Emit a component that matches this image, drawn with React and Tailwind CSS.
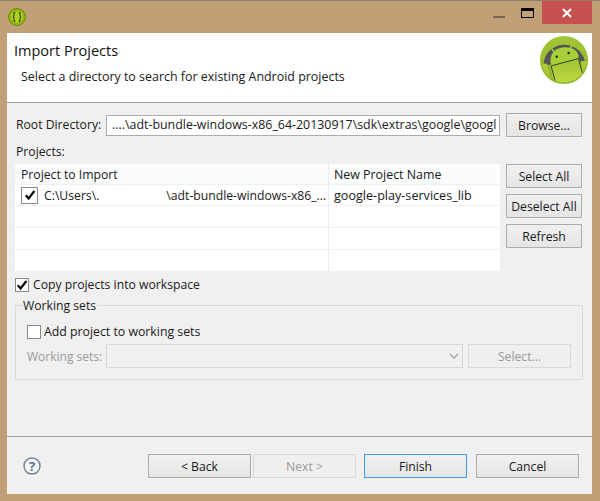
import React from 'react';

function Btn({ children, className = '', tone = 'normal' }) {
  const tones = {
    normal: 'border-[#acacac] bg-gradient-to-b from-[#f0f0f0] to-[#e5e5e5] text-[#1a1a1a]',
    focus: 'border-[#3c9cf0] bg-gradient-to-b from-[#f0f0f0] to-[#e5e5e5] text-[#1a1a1a]',
    disabled: 'border-[#d9d9d9] bg-[#efefef] text-[#9a9a9a]',
  };
  return (
    <div className={`flex items-center justify-center border h-6 pt-[2px] ${tones[tone]} ${className}`}>
      {children}
    </div>
  );
}

function Check({ checked = false, size = 'w-[14px] h-[14px]' }) {
  return (
    <div className={`${size} border border-[#8a8a8a] bg-white shrink-0 flex items-center justify-center`}>
      {checked && (
        <svg width="12" height="12" viewBox="0 0 12 12">
          <path d="M1.8 6.2 L4.6 9.4 L10.4 2" fill="none" stroke="#111" strokeWidth="2.3" />
        </svg>
      )}
    </div>
  );
}

function AndroidBadge() {
  return (
    <svg width="48" height="48" viewBox="0 0 48 48">
      <defs>
        <linearGradient id="rim" x1="0" y1="0" x2="0" y2="1">
          <stop offset="0" stopColor="#a3c63a" />
          <stop offset="1" stopColor="#8fb31e" />
        </linearGradient>
        <linearGradient id="body" x1="0" y1="0" x2="0" y2="1">
          <stop offset="0" stopColor="#9cc52f" />
          <stop offset="1" stopColor="#c2da48" />
        </linearGradient>
        <pattern id="mesh" width="3" height="3" patternUnits="userSpaceOnUse">
          <rect width="3" height="3" fill="#58585c" />
          <path d="M0 0 H3 M0 0 V3" stroke="#444448" strokeWidth="0.6" />
        </pattern>
        <clipPath id="inner">
          <circle cx="24" cy="24" r="22.5" />
        </clipPath>
      </defs>
      <circle cx="24" cy="24" r="24" fill="url(#rim)" />
      <path d="M3.5 27 A21 21 0 0 1 44.5 24 L44.5 26 L8 29 Z" fill="url(#mesh)" />
      <g clipPath="url(#inner)">
        <path d="M0 29 L7 27.5 L12 50 L0 50 Z" fill="#a6cb35" />
        <path d="M48 25 L41 25 L45 50 L48 50 Z" fill="#a6cb35" />
        <path d="M10 30 L39 22 L45 42 L38 50 L15 50 Z" fill="url(#body)" />
        <path d="M10.5 26 Q10 14 22 11.5 Q35 10 38.5 19 L38.5 22.5 L11 30 Z" fill="#a8cf38" />
        <path d="M11 30 L38.5 22.5" stroke="#2b2f22" strokeWidth="0.9" fill="none" />
        <path d="M11 30 L15.5 46 M38.5 22.5 L43.5 41" stroke="#2b2f22" strokeWidth="0.9" fill="none" />
      </g>
      <path d="M12 13 L15.5 18 M32 8 L30.5 13" stroke="#a8cf38" strokeWidth="1.5" />
      <circle cx="16.7" cy="20.7" r="1.2" fill="#222" />
      <circle cx="28.7" cy="17" r="1.2" fill="#222" />
    </svg>
  );
}

function EclipseIcon() {
  return (
    <svg width="18" height="18" viewBox="0 0 18 18">
      <circle cx="9" cy="9" r="8.5" fill="#8fb40c" stroke="#6d8a10" />
      <circle cx="9" cy="9" r="6" fill="#b3d41c" />
      <path d="M7.5 4.5 Q5.5 4.5 6 7 Q6 9 4.8 9 Q6 9 6 11 Q5.5 13.5 7.5 13.5 M10.5 4.5 Q12.5 4.5 12 7 Q12 9 13.2 9 Q12 9 12 11 Q12.5 13.5 10.5 13.5" fill="none" stroke="#33401a" strokeWidth="1.2" />
    </svg>
  );
}

const rows = [0, 1, 2];

export default function App() {
  return (
    <div className="w-[600px] h-[501px] bg-[#c1a078] border-t border-[#8f7a62] flex flex-col text-[12.2px] leading-4 text-[#1a1a1a] overflow-hidden font-['Open_Sans',sans-serif]">
      {/* title bar */}
      <div className="h-[32px] pl-[8px] pr-[8px] flex items-start shrink-0">
        <div className="mt-[7px]"><EclipseIcon /></div>
        <div className="ml-auto flex items-start">
          <div className="w-[12px] h-[2px] bg-[#7a6650] mt-[15px] mr-[16px]" />
          <div className="w-[13px] h-[10px] border border-black border-t-[3px] mt-[7px] mr-[8px]" />
          <div className="w-[50px] h-[23px] bg-[#c75050] flex items-center justify-center">
            <svg width="10" height="10" viewBox="0 0 10 10">
              <path d="M1 1 L9 9 M9 1 L1 9" stroke="#fff" strokeWidth="2" />
            </svg>
          </div>
        </div>
      </div>

      {/* dialog body */}
      <div className="mx-[7px] mr-[8px] h-[461px] flex flex-col bg-[#f0f0f0]">
        <div className="h-[70px] bg-white border-b border-[#a0a0a0] flex justify-between shrink-0 pl-[7px] pr-[4px]">
          <div>
            <div className="text-[14.5px] leading-5 mt-[8px] text-[#111]">Import Projects</div>
            <div className="mt-[8px] ml-[7px] leading-4 text-[12.45px]">Select a directory to search for existing Android projects</div>
          </div>
          <div className="mt-[3px]"><AndroidBadge /></div>
        </div>

        <div className="flex-1 pl-[8px] pr-[9px] pt-[10px]">
          <div className="flex items-center h-6">
            <div className="w-[91px] pl-[1px]">Root Directory:</div>
            <div className="w-[394px] h-[21px] border border-[#acacac] bg-white flex items-center pl-[5px] overflow-hidden whitespace-nowrap text-[12.4px]">
              ....\adt-bundle-windows-x86_64-20130917\sdk\extras\google\googl
            </div>
            <Btn className="w-[76px] ml-[6px]">Browse...</Btn>
          </div>

          <div className="mt-[7px] pl-[1px] h-4">Projects:</div>

          <div className="flex mt-[4px]">
            <div className="w-[485px] h-[107px] bg-white flex flex-col">
              <div className="flex h-[21px] bg-[#fbfcfd] border-b border-[#e9f1fb] shrink-0">
                <div className="w-[314px] pl-[6px] pt-[2px] border-r border-[#e9eef4] flex items-center">Project to Import</div>
                <div className="pl-[5px] pt-[2px] flex items-center text-[12.4px]">New Project Name</div>
              </div>
              <div className="flex h-[21px] border-b border-[#f0f0f0] shrink-0">
                <div className="w-[314px] pl-[6px] border-r border-[#e9f1fb] flex items-center overflow-hidden whitespace-nowrap">
                  <Check checked size="w-[17px] h-[17px]" />
                  <span className="ml-[6px] pt-[2px]">C:\Users\.</span>
                  <span className="ml-[67px] pt-[2px]">\adt-bundle-windows-x86_...</span>
                </div>
                <div className="pl-[5px] pt-[2px] flex items-center text-[12.6px]">google-play-services_lib</div>
              </div>
              {rows.map((r) => (
                <div key={r} className="flex flex-1 border-b border-[#f0f0f0] last:border-b-0">
                  <div className="w-[314px] border-r border-[#e9f1fb]" />
                </div>
              ))}
            </div>
            <div className="ml-[6px] w-[76px] flex flex-col gap-[6px]">
              <Btn>Select All</Btn>
              <Btn>Deselect All</Btn>
              <Btn>Refresh</Btn>
            </div>
          </div>

          <div className="flex items-center mt-[6px] h-4">
            <Check checked />
            <span className="ml-[4px]">Copy projects into workspace</span>
          </div>

          <div className="relative mt-[12px] w-[568px] h-[75px] border border-[#dadada] pl-[11px] pr-[11px] pt-[18px]">
            <span className="absolute left-[7px] top-[-8px] bg-[#f0f0f0] pr-[1px]">Working sets</span>
            <div className="flex items-center h-4">
              <Check />
              <span className="ml-[3px] text-[12.3px]">Add project to working sets</span>
            </div>
            <div className="flex items-center mt-[4px] h-6 text-[#9a9a9a]">
              <div className="w-[79px] pt-[2px] text-[12px]">Working sets:</div>
              <div className="w-[357px] h-6 border border-[#d9d9d9] flex items-center justify-end pr-[3px]">
                <svg width="10" height="7" viewBox="0 0 10 7">
                  <path d="M1 1 L5 5 L9 1" fill="none" stroke="#a8a8a8" strokeWidth="1.6" />
                </svg>
              </div>
              <Btn tone="disabled" className="w-[103px] ml-[5px]">Select...</Btn>
            </div>
          </div>
        </div>

        <div className="h-[58px] border-t border-[#a0a0a0] flex items-start shrink-0 pt-[17px] pl-[16px]">
          <svg width="18" height="18" viewBox="0 0 18 18" className="mt-[3px]">
            <circle cx="9" cy="9" r="8" fill="#f4f6f9" stroke="#6f7f99" strokeWidth="1.4" />
            <text x="9" y="13.5" textAnchor="middle" fontSize="13" fontWeight="700" fill="#5f6f8c" fontFamily="Open Sans">?</text>
          </svg>
          <div className="flex ml-[107px]">
            <Btn className="w-[103px]">&lt; Back</Btn>
            <Btn tone="disabled" className="w-[103px] ml-[2px]">Next &gt;</Btn>
            <Btn tone="focus" className="w-[103px] ml-[8px]">Finish</Btn>
            <Btn className="w-[103px] ml-[9px]">Cancel</Btn>
          </div>
        </div>
      </div>
    </div>
  );
}
